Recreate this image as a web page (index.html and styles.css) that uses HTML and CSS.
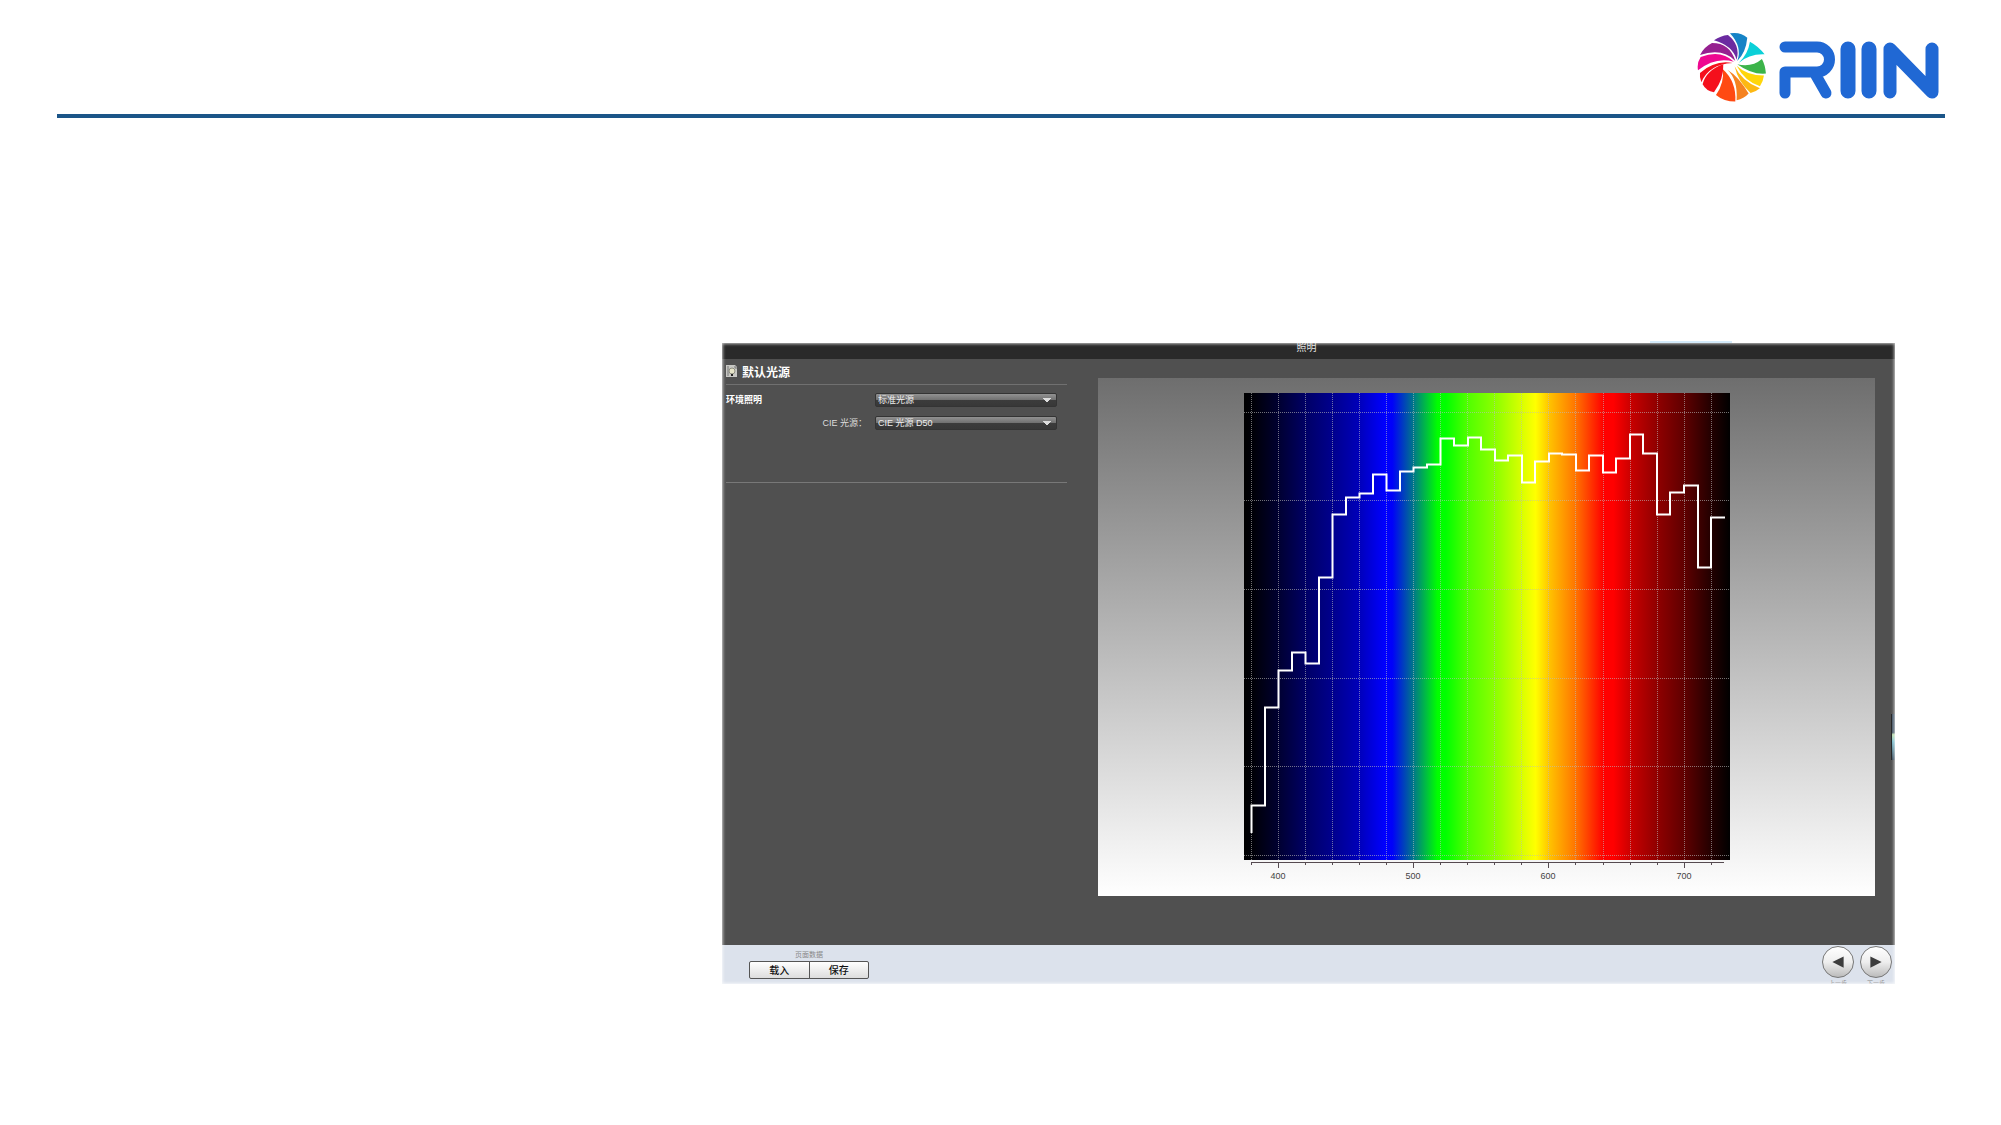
FILE: index.html
```html
<!DOCTYPE html>
<html lang="zh-CN">
<head>
<meta charset="utf-8">
<meta name="viewport" content="width=device-width, initial-scale=1">
<title>RIIN 照明</title>
<link rel="stylesheet" href="styles.css">
</head>
<body>
<header class="masthead">
  <svg class="logo" viewBox="0 0 244 72" role="img" aria-label="RIIN">
    <g transform="translate(-5 -2) scale(.333)">
      <path fill="#6b2aa0" d="M66 34Q86 20 108 18Q146 48 134 92Q122 50 66 34Z"/>
      <path fill="#1683c6" d="M114 13Q146 8 166 26Q162 70 136 96Q152 54 114 13Z"/>
      <path fill="#0bd0d8" d="M174 38Q200 52 218 76Q172 74 140 102Q168 76 174 38Z"/>
      <path fill="#3cb44a" d="M210 90Q220 108 222 134Q180 138 136 106Q180 116 210 90Z"/>
      <path fill="#ffd60a" d="M216 140Q214 158 204 172Q158 156 134 110Q166 140 216 140Z"/>
      <path fill="#fdb813" d="M204 178Q190 190 176 192Q138 158 128 112Q150 158 204 178Z"/>
      <path fill="#f58220" d="M170 194Q156 210 134 214Q138 150 106 122Q140 142 170 194Z"/>
      <path fill="#ff4a12" d="M130 218Q96 218 72 198Q98 162 92 120Q134 158 130 218Z"/>
      <path fill="#f5101c" d="M66 190Q42 186 32 166Q42 124 94 106Q96 150 66 190Z"/>
      <path fill="#f5101c" d="M28 160Q22 144 24 132Q70 92 122 102Q50 106 28 160Z"/>
      <path fill="#ee0890" d="M18 124Q14 102 26 84Q86 60 126 98Q70 82 18 124Z"/>
      <path fill="#962090" d="M24 78Q36 54 60 42Q114 42 130 96Q92 56 24 78Z"/>
    </g>
    <g fill="none" stroke="#2068d4" stroke-linejoin="round" stroke-linecap="round">
      <path stroke-width="11" d="M88 16H120A12.5 12.5 0 0 1 120 41H88V62M117 41L129 62"/>
      <path stroke-width="15" d="M151 18V60M172 18V60"/>
      <path stroke-width="13" d="M193 61V18L235 61V18"/>
    </g>
  </svg>
</header>
<main class="slide">
  <section class="window" aria-labelledby="window-title">
    <h1 class="titlebar" id="window-title">照明</h1>
    <div class="workspace">
      <form class="settings">
        <h2 class="heading">
          <svg class="doc-icon" viewBox="0 0 12 12" aria-hidden="true"><path fill="#c8c8c4" d="M0 0H9L11 2V12H0Z"/><path fill="none" stroke="#777" d="M2 1V11M9 1V3H11"/><circle cx="6" cy="6" r="3" fill="#e6e4c8" stroke="#8c8c80"/><path fill="#222" d="M5 9H7V11H5Z"/></svg>
          默认光源
        </h2>
        <div class="fields">
          <label class="group-label" for="ambient">环境照明</label>
          <select id="ambient"><option>标准光源</option></select>
          <label class="field-label" for="cie">CIE 光源：</label>
          <select id="cie"><option>CIE 光源 D50</option></select>
        </div>
      </form>
      <figure class="chart">
        <svg class="plot" viewBox="0 0 486 492" role="img" aria-label="CIE D50 光谱">
          <defs>
            <linearGradient id="spectrum">
              <stop offset="0" stop-color="#000"/><stop offset=".02" stop-color="#000008"/>
              <stop offset=".07" stop-color="#000030"/><stop offset=".13" stop-color="#000068"/>
              <stop offset=".18" stop-color="#00008c"/><stop offset=".235" stop-color="#0000b8"/>
              <stop offset=".29" stop-color="#00f"/><stop offset=".305" stop-color="#0000fa"/>
              <stop offset=".352" stop-color="#008080"/><stop offset=".398" stop-color="#0f0"/>
              <stop offset=".415" stop-color="#0f0"/><stop offset=".46" stop-color="#50ff00"/>
              <stop offset=".52" stop-color="#90ff00"/><stop offset=".565" stop-color="#d0ff00"/>
              <stop offset=".6" stop-color="#ff0"/><stop offset=".63" stop-color="#ffc000"/>
              <stop offset=".68" stop-color="#ff7800"/><stop offset=".74" stop-color="#f00"/>
              <stop offset=".76" stop-color="#f00"/><stop offset=".8" stop-color="#c40000"/>
              <stop offset=".85" stop-color="#900000"/><stop offset=".905" stop-color="#600000"/>
              <stop offset=".96" stop-color="#240000"/><stop offset="1" stop-color="#000"/>
            </linearGradient>
          </defs>
          <path fill="url(#spectrum)" d="M0 0H486V467H0Z"/>
          <path class="grid" d="M7.5 0V467M34.5 0V467M61.5 0V467M88.5 0V467M115.5 0V467M142.5 0V467M169.5 0V467M196.5 0V467M223.5 0V467M250.5 0V467M277.5 0V467M304.5 0V467M331.5 0V467M359.5 0V467M386.5 0V467M413.5 0V467M440.5 0V467M467.5 0V467M0 19.5H486M0 107.5H486M0 196.5H486M0 285.5H486M0 373.5H486M0 462.5H486"/>
          <path class="curve" d="M7.5 440V412.5H21V314.5H34.5V277.5H48V259.5H61.5V270.5H75V184.5H88.5V121.5H102V104.5H115.5V100.5H129V81.5H142.5V97.5H156V78.5H169.5V74.5H183V71.5H196.5V45.5H210V52.5H224V44.5H237V56.5H251V67.5H264V62.5H278V89.5H291V68.5H305V60.5H318V61.5H332V77.5H345V62.5H359V79.5H372V65.5H386V41.5H399V60.5H413V121.5H426V99.5H440V92.5H454V174.5H467V124.5H481"/>
          <path class="axis" d="M7 469.5H480M7.5 469V472M34.5 469V475M61.5 469V472M88.5 469V472M115.5 469V472M142.5 469V472M169.5 469V475M196.5 469V472M223.5 469V472M250.5 469V472M277.5 469V472M304.5 469V475M331.5 469V472M359.5 469V472M386.5 469V472M413.5 469V472M440.5 469V475M467.5 469V472"/>
          <g class="tick-labels"><text x="34" y="486">400</text><text x="169" y="486">500</text><text x="304" y="486">600</text><text x="440" y="486">700</text></g>
        </svg>
      </figure>
    </div>
    <footer class="actions">
      <div class="page-data">
        <span class="caption" id="data-label">页面数据</span>
        <div class="button-pair" role="group" aria-labelledby="data-label">
          <button type="button">载入</button><button type="button">保存</button>
        </div>
      </div>
      <nav class="steps" aria-label="步骤">
        <div class="step"><button type="button" aria-labelledby="previous"><svg viewBox="0 0 32 32"><path d="M10 16L22 10V22Z"/></svg></button><span id="previous">上一步</span></div>
        <div class="step"><button type="button" aria-labelledby="next"><svg viewBox="0 0 32 32"><path d="M22 16L10 10V22Z"/></svg></button><span id="next">下一步</span></div>
      </nav>
    </footer>
    <span class="edge-tab"></span>
    <span class="top-glint"></span>
  </section>
</main>
</body>
</html>
```
FILE: styles.css
```css
* { box-sizing: border-box; }

body {
  margin: 0;
  background: #fff;
  font-family: "Liberation Sans", "Noto Sans CJK SC", sans-serif;
}

.masthead {
  display: flex;
  justify-content: flex-end;
  margin: 0 56px 0 57px;
  padding: 31px 4px 11px 0;
  border-bottom: 4px solid #1b5588;
}

.logo { display: block; width: 244px; height: 72px; }

.slide {
  display: grid;
  grid-template-columns: 722fr 1173fr 106fr;
  padding: 225px 0 100px;
}

.window {
  position: relative;
  grid-column: 2;
  min-width: 0;
  background: #505050;
}

/* Feathered white rim around the window */
.window::after {
  content: "";
  position: absolute;
  inset: 0;
  box-shadow: inset 0 0 3px 1px rgba(255, 255, 255, .7);
  pointer-events: none;
}

.titlebar {
  height: 16px;
  margin: 0;
  padding-right: 4px;
  overflow: hidden;
  background: #2a2a2a;
  color: #e4e4e4;
  font-size: 10px;
  font-weight: 400;
  line-height: 10px;
  text-align: center;
}

.workspace {
  display: grid;
  grid-template-columns: 345fr 777fr;
  column-gap: 31px;
  padding: 6px 20px 49px 0;
}

.settings {
  align-self: start;
  height: 118px;
  margin-left: 4px;
  border-bottom: 1px solid #787878;
}

.heading {
  display: flex;
  align-items: flex-start;
  gap: 4px;
  height: 20px;
  margin: 0;
  color: #fff;
  font-size: 12px;
  font-weight: 700;
  line-height: 16px;
  border-bottom: 1px solid #707070;
}

.doc-icon { width: 12px; height: 12px; }

.fields {
  display: grid;
  grid-template-columns: 141fr 182fr;
  column-gap: 8px;
  row-gap: 9px;
  align-items: center;
  padding: 8px 10px 0 0;
  color: #ddd;
  font-size: 9px;
  line-height: 14px;
}

.group-label { color: #fff; font-weight: 700; }

.field-label { text-align: right; }

.fields select {
  width: 100%;
  height: 14px;
  padding: 0 2px;
  border: 1px solid #343434;
  border-radius: 2px;
  background:
    linear-gradient(to bottom right, #ddd 50%, transparent 51%) right 5px center / 4px 4px no-repeat,
    linear-gradient(to bottom left, #ddd 50%, transparent 51%) right 9px center / 4px 4px no-repeat,
    linear-gradient(#929292, #707070 50%, #3c3c3c 51%, #383838);
  color: #eee;
  font: inherit;
  line-height: 12px;
  appearance: none;
}

.chart {
  display: flex;
  justify-content: center;
  margin: 13px 0 0;
  padding: 15px 0 11px;
  background: linear-gradient(#6e6e6e, #fff);
}

.plot { display: block; width: 486px; max-width: 100%; height: auto; }

.grid { fill: none; stroke: #bbb; stroke-opacity: .6; stroke-dasharray: 1 1; }

.curve { fill: none; stroke: #fff; stroke-width: 2; }

.axis { fill: none; stroke: #554a50; }

.tick-labels { fill: #444; font-size: 9px; text-anchor: middle; }

.actions {
  display: flex;
  justify-content: space-between;
  height: 39px;
  padding: 0 3px 0 27px;
  overflow: hidden;
  background: #dce2ec;
}

.page-data { width: 120px; padding-top: 4px; text-align: center; }

.caption { display: block; color: #888; font-size: 7px; line-height: 12px; }

.button-pair { display: flex; }

.button-pair button {
  flex: 1;
  height: 18px;
  padding: 0;
  border: 1px solid #555;
  border-radius: 2px 0 0 2px;
  background: linear-gradient(#fff, #ddd);
  color: #111;
  font: 500 10px/16px "Noto Sans CJK SC", sans-serif;
}

.button-pair button + button { margin-left: -1px; border-radius: 0 2px 2px 0; }

.steps { display: flex; gap: 6px; }

.step { width: 32px; color: #888; font-size: 6px; line-height: 10px; text-align: center; }

.step span { display: block; }

.step button {
  display: block;
  width: 32px;
  height: 32px;
  margin-top: 1px;
  padding: 0;
  border: 1px solid #777;
  border-radius: 50%;
  background: linear-gradient(#fff, #eee 50%, #bbb);
}

.step svg { display: block; width: 30px; height: 30px; fill: #3c3c3c; }

.edge-tab {
  position: absolute;
  top: 371px;
  right: 0;
  width: 4px;
  height: 46px;
  border-left: 1px solid #222;
  background: linear-gradient(#456 40%, #bda 45%, #7bc 60%, #345);
}

.top-glint {
  position: absolute;
  top: -2px;
  right: 163px;
  width: 82px;
  height: 2px;
  background: #d4ebfa;
}
```
